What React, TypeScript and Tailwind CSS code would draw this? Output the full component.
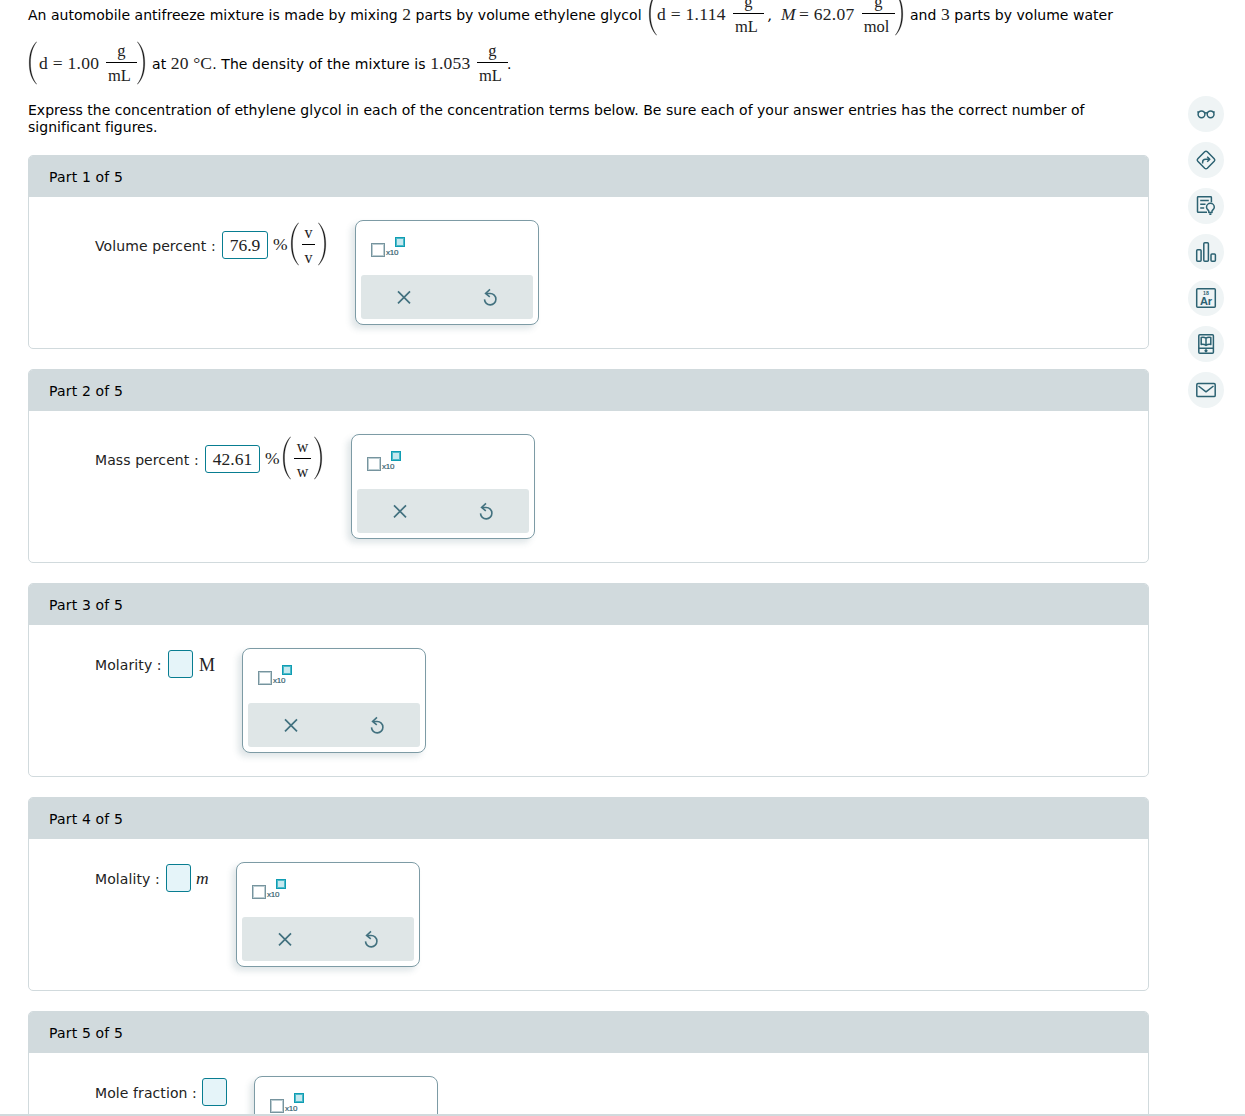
import React from 'react';

type Part = {
  id: number;
  label: string;
  labelClass: string;
  value?: string;
  inputClass: string;
  unit: React.ReactNode;
  unitClass: string;
  tall?: boolean;
};

function Paren({ flip }: { flip?: boolean }) {
  return (
    <svg
      width="9"
      height="44"
      viewBox="0 0 9 44"
      className={`flex-shrink-0 ${flip ? '-scale-x-100' : ''}`}
    >
      <path d="M8.7 0.7C3.4 6 1.3 13 1.3 22s2.1 16 7.4 21.3C4.6 38 2.4 31 2.4 22S4.6 6 8.7 0.7Z" fill="#111" stroke="#111" strokeWidth="0.35" />
    </svg>
  );
}

function Num({ children }: { children: React.ReactNode }) {
  return (
    <span className="font-['Liberation_Serif',serif] text-[17.5px] leading-none tracking-[0.15px] text-[#222]">
      {children}
    </span>
  );
}

function Fraction({ top, bottom, className }: { top: string; bottom: string; className: string }) {
  return (
    <span className={`flex flex-col items-center flex-shrink-0 font-['Liberation_Serif',serif] text-[16.5px] text-[#222] ${className}`}>
      <span className="h-5 leading-[18px]">{top}</span>
      <span className="h-px w-full bg-black" />
      <span className="h-5 leading-[26px] pr-1">{bottom}</span>
    </span>
  );
}

function UnitFraction({ text, className }: { text: string; className: string }) {
  return (
    <span className="flex items-center">
      <Paren />
      <span className={`flex flex-col items-center mx-[3px] text-[16px] ${className}`}>
        <span className="h-[21px] leading-[20px]">{text}</span>
        <span className="h-px w-full bg-black" />
        <span className="h-[21px] leading-[26px]">{text}</span>
      </span>
      <Paren flip />
    </span>
  );
}

const parts: Part[] = [
  {
    id: 1,
    label: 'Volume percent :',
    labelClass: 'w-[127px]',
    value: '76.9',
    inputClass: 'w-[46px]',
    unit: (
      <>
        <span className="w-[17px]">%</span>
        <UnitFraction text="v" className="w-[13px]" />
      </>
    ),
    unitClass: 'w-[82px]',
    tall: true
  },
  {
    id: 2,
    label: 'Mass percent :',
    labelClass: 'w-[110px]',
    value: '42.61',
    inputClass: 'w-[55px]',
    unit: (
      <>
        <span className="w-[17px]">%</span>
        <UnitFraction text="w" className="w-[17px]" />
      </>
    ),
    unitClass: 'w-[86px]',
    tall: true
  },
  {
    id: 3,
    label: 'Molarity :',
    labelClass: 'w-[73px]',
    inputClass: 'w-[25px]',
    unit: <span className="pt-[2px] pl-px text-[18px]">M</span>,
    unitClass: 'w-[44px]'
  },
  {
    id: 4,
    label: 'Molality :',
    labelClass: 'w-[71px]',
    inputClass: 'w-[25px]',
    unit: <span className="italic">m</span>,
    unitClass: 'w-[40px]'
  },
  {
    id: 5,
    label: 'Mole fraction :',
    labelClass: 'w-[107px]',
    inputClass: 'w-[25px]',
    unit: null,
    unitClass: 'w-[22px]'
  }
];

function Palette() {
  return (
    <div className="w-[184px] h-[105px] flex-shrink-0 flex flex-col justify-between rounded-[8px] border border-[#7d9ba5] bg-white p-[5px] shadow-[-4px_4px_6px_rgba(60,100,115,0.16)]">
      <svg width="60" height="36" viewBox="0 0 60 36">
        <rect x="10.5" y="17.5" width="13" height="13" fill="#fff" stroke="#76949e" />
        <rect x="11.5" y="18.5" width="11" height="11" fill="none" stroke="#bccdd2" />
        <rect x="34.5" y="11.5" width="9" height="9" fill="#c6e9ef" stroke="#0f9db3" />
        <rect x="35.5" y="12.5" width="7" height="7" fill="none" stroke="#4cb9c9" />
        <text x="25" y="29" fontSize="8" letterSpacing="-0.2" fill="#33606e" stroke="#33606e" strokeWidth="0.2" fontFamily="Liberation Sans, sans-serif">x10</text>
      </svg>
      <div className="grid grid-cols-2 h-11 rounded-[3px] bg-[#dfe6e7]">
        <button className="flex items-center justify-center">
          <svg width="20" height="20" viewBox="0 0 20 20" fill="none" stroke="#42717f" strokeWidth="1.7">
            <path d="M4 4.3 16 16.3M16 4.3 4 16.3" />
          </svg>
        </button>
        <button className="flex items-center justify-center">
          <svg width="20" height="20" viewBox="0 0 20 20" fill="none" stroke="#42717f" strokeWidth="1.6">
            <path d="M4.5 12.4a5.7 5.7 0 1 0 5.7-5.9H6" />
            <path d="M10 2.4 5.6 6.4 9.8 9.8" />
          </svg>
        </button>
      </div>
    </div>
  );
}

function PartCard({ part }: { part: Part }) {
  return (
    <section className="h-[194px] flex-shrink-0 rounded-[5px] border border-[#d1dadd] overflow-hidden bg-white">
      <h2 className="h-[41px] flex items-center bg-[#d1dadd] pl-5 pt-px text-[14px] tracking-[0.16px] text-black">
        Part {part.id} of 5
      </h2>
      <div className="flex items-start pl-[66px] pt-[23px]">
        <div className={`flex items-center ${part.tall ? 'h-[50px]' : 'h-8'}`}>
          <span className={`${part.labelClass} pt-[2px] whitespace-nowrap text-[14px] tracking-[0.09px] text-[#222]`}>
            {part.label}
          </span>
          <span
            className={`${part.inputClass} h-7 flex items-center justify-center rounded-[3px] border border-[#087d91] font-['Liberation_Serif',serif] text-[17.5px] text-[#222] ${
              part.value ? 'bg-white' : 'bg-[#e5f4f9]'
            }`}
          >
            {part.value}
          </span>
          <span
            className={`${part.unitClass} flex items-center pl-[5px] mr-[5px] font-['Liberation_Serif',serif] text-[17.5px] text-[#222] ${
              part.tall ? 'pb-[2px]' : ''
            }`}
          >
            {part.unit}
          </span>
        </div>
        <Palette />
      </div>
    </section>
  );
}

const tools: { name: string; icon: React.ReactNode }[] = [
  {
    name: 'glasses',
    icon: (
      <>
        <circle cx="13.5" cy="18.3" r="3.4" />
        <circle cx="22.6" cy="18.3" r="3.4" />
        <path d="M16.7 17.2q1.3-1 2.6 0M10.5 16.6 9.6 15.4M25.5 16.6 26.4 15.4" />
      </>
    )
  },
  {
    name: 'directions',
    icon: (
      <>
        <path d="M16.7 9.8q1.3-1.2 2.6 0l6.9 6.9q1.2 1.3 0 2.6l-6.9 6.9q-1.3 1.2-2.6 0l-6.9-6.9q-1.2-1.3 0-2.6Z" />
        <path d="M14.6 21.5v-1.3q0-3 3-3h3.8M19.2 14.7l2.6 2.5-2.6 2.5" />
      </>
    )
  },
  {
    name: 'hints',
    icon: (
      <>
        <path d="M23.4 14.3V9.5q0-.7-.8-.7H10.3q-.8 0-.8.7v14q0 .8.8.8H19M12.2 12.6h8.6M12.2 16.3h5.3M12.2 20h4" />
        <path d="M20.8 23.3c0-1.2-2.3-1.9-2.3-4.1a3.9 3.9 0 0 1 7.8 0c0 2.2-2.3 2.9-2.3 4.1v1.2h-3.2ZM21.3 26.3h2.1" />
      </>
    )
  },
  {
    name: 'data',
    icon: (
      <>
        <rect x="8.7" y="15.8" width="4.4" height="11.4" rx="1" />
        <rect x="15.8" y="8.8" width="4.6" height="18.4" rx="1" />
        <rect x="23" y="20" width="4.4" height="7.2" rx="1" />
      </>
    )
  },
  {
    name: 'periodic table',
    icon: (
      <>
        <rect x="8.7" y="8.7" width="18.6" height="18.6" rx="1" />
        <text x="18" y="14.9" textAnchor="middle" fontSize="5.2" fontWeight="700" fill="#2c6272" stroke="none" fontFamily="Liberation Sans, sans-serif">18</text>
        <text x="18" y="24.7" textAnchor="middle" fontSize="11" fontWeight="700" fill="#2c6272" stroke="none" fontFamily="Liberation Sans, sans-serif">Ar</text>
      </>
    )
  },
  {
    name: 'ebook',
    icon: (
      <>
        <rect x="10.8" y="8.7" width="14.6" height="18.6" rx="1" />
        <path d="M10.8 22.2h14.6M18 12.2q-2.1-1.4-4.8-.7v7q2.7-.5 4.8.9 2.1-1.4 4.8-.9v-7q-2.7-.7-4.8.7Zm0 0v7" />
        <path d="m18 23.8.9.9-.9.9-.9-.9Z" />
      </>
    )
  },
  {
    name: 'message',
    icon: (
      <>
        <rect x="8.8" y="11.6" width="18.4" height="13" rx="1.2" />
        <path d="m10.5 14 7.5 5.8 7.5-5.8" />
      </>
    )
  }
];

export default function App() {
  return (
    <div className="h-[1116px] w-[1245px] flex flex-col bg-white font-['DejaVu_Sans',sans-serif]">
      <div className="flex-1 min-h-0 flex items-start overflow-hidden">
        <main className="w-[1121px] ml-7 flex-shrink-0">
          {/* Question text */}
          <div className="-mt-[11px] text-[14px] tracking-[0.02px] text-black whitespace-nowrap">
            <div className="h-[49px] flex items-center">
              <span className="w-[620px] pt-[3px]">
                An automobile antifreeze mixture is made by mixing <Num>2</Num> parts by volume ethylene glycol
              </span>
              <Paren />
              <span className="w-[76px] pt-[2px] font-['Liberation_Serif',serif] text-[17.5px] tracking-[0.3px] text-[#222]">d = 1.114</span>
              <Fraction top="g" bottom="mL" className="w-[31px]" />
              <span className="w-[17px] pl-1 pt-1 italic">,</span>
              <span className="w-[81px] pt-[2px] font-['Liberation_Serif',serif] text-[17.5px] tracking-[0.3px] text-[#222]">
                <i className="mr-[3px]">M</i>= 62.07
              </span>
              <Fraction top="g" bottom="mol" className="w-[33px]" />
              <Paren flip />
              <span className="pl-[6px] pt-[3px]">
                and <Num>3</Num> parts by volume water
              </span>
            </div>
            <div className="h-[49px] flex items-center">
              <Paren />
              <span className="w-[69px] pl-[2px] pt-[2px] font-['Liberation_Serif',serif] text-[17.5px] tracking-[0.3px] text-[#222]">d = 1.00</span>
              <Fraction top="g" bottom="mL" className="w-[31px]" />
              <Paren flip />
              <span className="w-[331px] pl-[6px] pt-[3px] tracking-[0.1px]">
                at <Num>20 °C</Num>. The density of the mixture is <Num>1.053</Num>
              </span>
              <Fraction top="g" bottom="mL" className="w-[31px]" />
              <span className="pt-[3px] -ml-px">.</span>
            </div>
          </div>
          <p className="mt-[15px] h-[53px] text-[14px] leading-[17px] tracking-[0.02px] text-black whitespace-nowrap">
            Express the concentration of ethylene glycol in each of the concentration terms below. Be sure each of your answer entries has the correct number of
            <br />
            significant figures.
          </p>

          {/* Answer parts */}
          <div className="flex flex-col gap-5">
            {parts.map((part) => (
              <PartCard key={part.id} part={part} />
            ))}
          </div>
        </main>

        {/* Tool rail */}
        <aside className="ml-[39px] pt-24 flex flex-col gap-[10px]">
          {tools.map((tool) => (
            <button key={tool.name} className="w-9 h-9 rounded-full bg-[#eff4f5]">
              <svg width="36" height="36" viewBox="0 0 36 36" fill="none" stroke="#2c6272" strokeWidth="1.5" strokeLinejoin="round">
                {tool.icon}
              </svg>
            </button>
          ))}
        </aside>
      </div>
      <div className="h-[2px] bg-[#d1dadd]" />
    </div>
  );
}
